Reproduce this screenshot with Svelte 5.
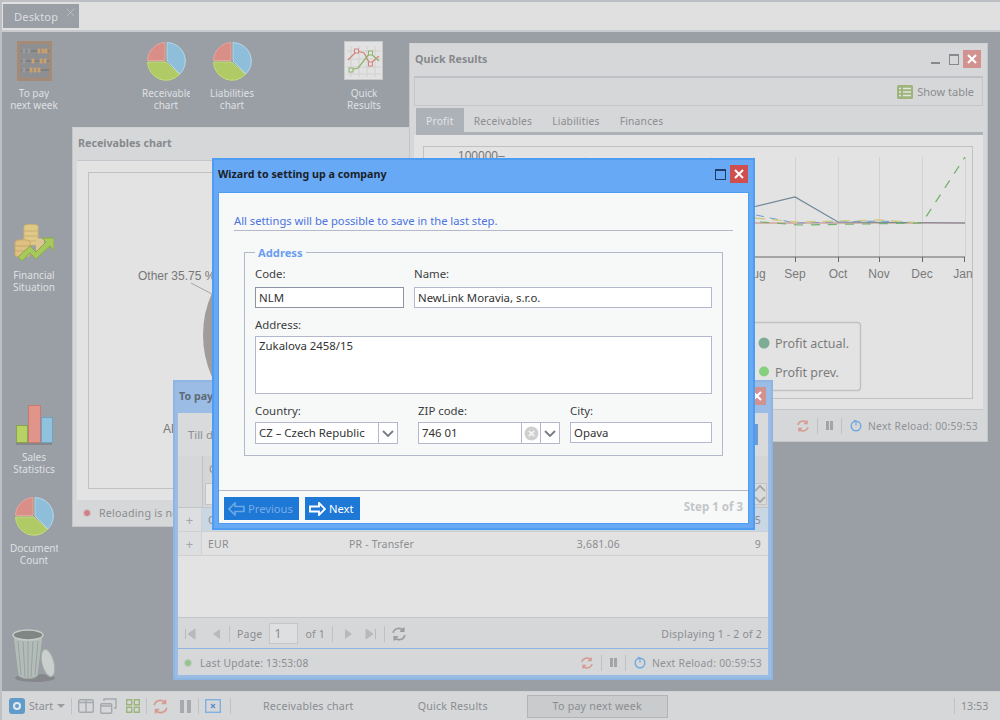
<script>
	const shortcuts = [
		{ x: 0, y: 9, lines: ['To pay', 'next week'], icon: 'abacus' },
		{ x: 132, y: 9, lines: ['Receivable', 'chart'], icon: 'pie' },
		{ x: 198, y: 9, lines: ['Liabilities', 'chart'], icon: 'pie' },
		{ x: 330, y: 9, lines: ['Quick', 'Results'], icon: 'lines' },
		{ x: 0, y: 191, lines: ['Financial', 'Situation'], icon: 'coins' },
		{ x: 0, y: 373, lines: ['Sales', 'Statistics'], icon: 'bars' },
		{ x: 0, y: 464, lines: ['Documents', 'Count'], icon: 'pie' }
	];
	const tabs = ['Receivables', 'Liabilities', 'Finances'];
	const gridX = [541, 585, 626, 669, 711, 753, 795, 838, 879, 922, 965];
	const months = [['Sep', 795], ['Oct', 838], ['Nov', 879], ['Dec', 922], ['Jan', 963]];
</script>

{#snippet pie()}
	<svg width="40" height="40" viewBox="0 0 40 40">
		<circle cx="20" cy="21" r="19" fill="#7f8a70" opacity=".5" />
		<path d="M19 19.500 H1.500 A18.500 18.500 0 0 1 19 1.500Z" fill="#d98f87" stroke="#e6a79f" />
		<path d="M21 1.500 A18.500 18.500 0 0 1 34 33 L21 20Z" fill="#8fbedb" stroke="#b5d8ea" />
		<path d="M1.500 21 H20 L33.500 33.500 A18.500 18.500 0 0 1 1.500 21Z" fill="#b0cb66" stroke="#c6dc86" />
	</svg>
{/snippet}

{#snippet abacus()}
	<svg width="40" height="40" viewBox="0 0 40 40">
		<rect x="4.500" y="1.500" width="32" height="37" fill="#8d8f92" stroke="#a58a76" stroke-width="3" />
		{#each [10, 20, 29] as y}
			<path d="M7 {y} H35" stroke="#6e7075" />
		{/each}
		{#each [[10, 10, '#9b9b9b'], [15, 10, '#9b9b9b'], [25, 10, '#c9a070'], [29, 10, '#c9a070'], [32, 10, '#c9a070'], [10, 20, '#9b9b9b'], [19, 20, '#c9a070'], [27, 20, '#c9a070'], [31, 20, '#c9a070'], [10, 29, '#9b9b9b'], [17, 29, '#c9a070'], [21, 29, '#c9a070'], [25, 29, '#c9a070']] as [x, y, c]}
			<rect x={x - 1.5} y={y - 2.5} width="3" height="5" rx="1" fill={c} />
		{/each}
	</svg>
{/snippet}

{#snippet lines()}
	<svg width="40" height="40" viewBox="0 0 40 40">
		<rect x=".5" y=".5" width="38" height="38" fill="#e2e2e2" stroke="#c8c8c8" />
		<path d="M7 5V36M15 5V36M23 5V36M31 5V36M3 10H37M3 18H37M3 26H37M3 33H37" stroke="#d0d0d0" />
		<path d="M4 19 L13 10 L20 12 L26 23 L35 15" fill="none" stroke="#d3847b" stroke-width="1.300" />
		<path d="M7 29 L14 27 L26 12 L35 20" fill="none" stroke="#90b568" stroke-width="1.300" />
		<rect x="10.500" y="8" width="4" height="4" fill="#e2e2e2" stroke="#d3847b" />
		<rect x="24.500" y="21" width="4" height="4" fill="#e2e2e2" stroke="#d3847b" />
		<rect x="5" y="27" width="4" height="4" fill="#e2e2e2" stroke="#90b568" />
		<rect x="24.500" y="10" width="4" height="4" fill="#e2e2e2" stroke="#90b568" />
	</svg>
{/snippet}

{#snippet coins()}
	<svg width="40" height="40" viewBox="0 0 40 40">
		<path d="M10 3 C10 1 24 1 24 3 V22 H10Z" fill="#dfc888" stroke="#cdb46e" />
		<path d="M10 8H24M10 13H24M10 18H24" stroke="#c8b070" />
		<path d="M1 19 C1 16 16 16 16 19 V32 C16 35 1 35 1 32Z" fill="#dec083" stroke="#c9a96a" />
		<path d="M1 23H16M1 28H16" stroke="#c8a868" />
		<path d="M22 17 C22 15 30 15 30 17 V28 H22Z" fill="#dcc590" />
		<path d="M4 34 L16 23 L22 29 L32 19 L28 15 H40 V28 L36 23 L22 36 L16 30 L8 38Z" fill="#a7c85c" stroke="#8aab47" />
	</svg>
{/snippet}

{#snippet bars()}
	<svg width="40" height="40" viewBox="0 0 40 40">
		<rect x="2" y="38" width="36" height="2" fill="#86888c" />
		<rect x="2.500" y="20.500" width="11" height="17" fill="#b8d165" stroke="#8aa34f" />
		<rect x="14.500" y=".5" width="12" height="37" fill="#e0948a" stroke="#c87a70" />
		<rect x="27.500" y="12.500" width="11" height="25" fill="#90c2de" stroke="#6fa3c2" />
	</svg>
{/snippet}

{#snippet winButtons(minimise)}
	<div class="win-buttons">
		{#if minimise}<span class="btn-min"></span>{/if}
		<span class="btn-max"></span>
		<span class="btn-close">
			<svg width="10" height="10" viewBox="0 0 10 10"><path d="M1 1 9 9M9 1 1 9" stroke="#fff" stroke-width="2" /></svg>
		</span>
	</div>
{/snippet}

{#snippet reloadStatus()}
	<div class="reload">
		<svg width="12" height="12" viewBox="0 0 12 12"><path d="M1 5 A5 4.500 0 0 1 10 3 M11 7 A5 4.500 0 0 1 2 9 M10 .5V3.500H7M2 11.500V8.500H5" fill="none" stroke="#d69a90" stroke-width="1.500" /></svg>
		<i class="vsep"></i>
		<span class="pause"></span>
		<i class="vsep"></i>
		<svg width="12" height="13" viewBox="0 0 12 13"><circle cx="6" cy="7" r="4.800" fill="none" stroke="#6ea8e0" stroke-width="1.400" /><path d="M4 1 6 2.500V6.500" fill="none" stroke="#6ea8e0" stroke-width="1.200" /></svg>
		<span class="reload-text">Next Reload: 00:59:53</span>
	</div>
{/snippet}

<div class="page">
	<header class="tabstrip">
		<div class="desktop-tab">
			<span>Desktop</span>
			<svg class="tab-x" width="9" height="9" viewBox="0 0 9 9"><path d="M.5 .5 8.500 8.500M8.500 .5 .5 8.500" stroke="#b9bbbd" /></svg>
		</div>
	</header>

	<main class="desktop">
		{#each shortcuts as s}
			<div class="shortcut" style="left: {s.x}px; top: {s.y}px">
				<div class="glyph">
					{#if s.icon === 'pie'}{@render pie()}
					{:else if s.icon === 'abacus'}{@render abacus()}
					{:else if s.icon === 'lines'}{@render lines()}
					{:else if s.icon === 'coins'}{@render coins()}
					{:else}{@render bars()}{/if}
				</div>
				<span>{s.lines[0]}</span>
				<span>{s.lines[1]}</span>
			</div>
		{/each}

		<div class="trash">
			<svg width="48" height="54" viewBox="0 0 48 54">
				<ellipse cx="24" cy="49" rx="20" ry="4" fill="#85878b" />
				<path d="M2 6 L7 46 C10 51 24 51 27 46 L32 6Z" fill="#b3bcb8" stroke="#98a29e" />
				<path d="M7 12 10 46M12 12 14 48M17 12 17 49M22 12 20 48M27 12 24 46" stroke="#98a29e" />
				<ellipse cx="17" cy="6" rx="15" ry="5" fill="#7f8684" stroke="#c5cdca" stroke-width="1.500" />
				<ellipse cx="37" cy="34" rx="6" ry="14" fill="#c9d0cd" stroke="#a5aeaa" transform="rotate(-14 37 34)" />
			</svg>
		</div>

		<section class="window receivables">
			<div class="win-title dim"><b>Receivables chart</b></div>
			<div class="win-body">
				<svg class="pie-chart" width="340" height="318" viewBox="88 172 340 318">
					<rect x="88.500" y="172.500" width="338" height="316" fill="none" stroke="#bfc1c5" />
					<path d="M212 293 A102.500 102.500 0 0 0 212 377Z" fill="#a09c9c" />
					<path d="M191 283 212 294" stroke="#a5a5a5" />
					<text x="138" y="280" class="chart-text">Other 35.75 %</text>
					<text x="163" y="433" class="chart-text">AR</text>
				</svg>
			</div>
			<div class="win-status">
				<span class="dot red"></span>
				<span>Reloading is not active</span>
			</div>
		</section>

		<section class="window quick">
			<div class="win-title dim">
				<b>Quick Results</b>
				{@render winButtons(true)}
			</div>
			<div class="toolbar">
				<svg width="16" height="14" viewBox="0 0 16 14"><rect width="16" height="14" rx="1.500" fill="#9db57c" /><path d="M2 3.500H4M6 3.500H14M2 7H4M6 7H14M2 10.500H4M6 10.500H14" stroke="#e3e6dc" stroke-width="1.600" /></svg>
				<span>Show table</span>
			</div>
			<nav class="tabs">
				<span class="tab active">Profit</span>
				{#each tabs as t}
					<span class="tab">{t}</span>
				{/each}
			</nav>
			<div class="chart-panel">
				<svg width="550" height="254" viewBox="423 146 550 254">
					<rect x="423.500" y="146.500" width="549" height="252" fill="none" stroke="#bfc1c5" />
					{#each gridX as x}
						<path d="M{x + .5} 157V257" stroke="#d2d2d2" />
					{/each}
					<text x="458" y="160" class="chart-text">100000–</text>
					<path d="M745 223H965" stroke="#d0837a" />
					<path d="M745 209 795 197 838 222 965 223" fill="none" stroke="#70889a" stroke-width="1.200" />
					<path d="M756 215 795 223 838 222 880 221 922 223" fill="none" stroke="#6f9bd0" stroke-dasharray="8 6" />
					<path d="M755 218 795 222 838 221 880 220 922 223" fill="none" stroke="#cfcb80" stroke-width="1.300" stroke-dasharray="10 7" />
					<path d="M760 222 800 225 922 223 965 157" fill="none" stroke="#73b06f" stroke-width="1.200" stroke-dasharray="9 8" />
					<path d="M730 257H965M795.500 257V262M838.500 257V262M879.500 257V262M922.500 257V262M964.500 257V262" stroke="#666" />
					<text x="755" y="278" class="axis" text-anchor="middle">Aug</text>
					{#each months as [m, x]}
						<text {x} y="278" class="axis" text-anchor="middle">{m}</text>
					{/each}
					<rect x="740.500" y="322.500" width="120" height="68" rx="3" fill="none" stroke="#c1c1c1" stroke-width="1.400" />
					<circle cx="764" cy="343" r="5.500" fill="#7dac96" />
					<circle cx="764" cy="371.500" r="5" fill="#86cf7c" />
					<text x="775" y="348" class="legend">Profit actual.</text>
					<text x="775" y="377" class="legend">Profit prev.</text>
				</svg>
			</div>
			<div class="win-status end">{@render reloadStatus()}</div>
		</section>

		<section class="window pay">
			<div class="pay-title">
				<b>To pay next week</b>
				<span class="btn-close">
					<svg width="10" height="10" viewBox="0 0 10 10"><path d="M1 1 9 9M9 1 1 9" stroke="#fff" stroke-width="2" /></svg>
				</span>
			</div>
			<div class="pay-body">
				<div class="pay-filter">
					<span>Till date</span>
					<span class="filter-btn"></span>
				</div>
				<div class="grid-head">
					<div class="grid-gutter"></div>
					<div class="grid-headcell">
						<span>Currency</span>
						<div class="grid-filter">
							<span class="filter-box"></span>
							<svg width="12" height="20" viewBox="0 0 12 20"><path d="M1 7 6 2 11 7M1 13 6 18 11 13" fill="none" stroke="#a2a2a2" stroke-width="1.600" /></svg>
						</div>
					</div>
				</div>
				<div class="row selected">
					<span class="plus">+</span>
					<span class="c1">CZK</span>
					<span class="c2"></span>
					<span class="c3"></span>
					<span class="c4">15</span>
				</div>
				<div class="row">
					<span class="plus">+</span>
					<span class="c1">EUR</span>
					<span class="c2">PR - Transfer</span>
					<span class="c3">3,681.06</span>
					<span class="c4">9</span>
				</div>
				<div class="grid-fill"></div>
				<div class="pager">
					<svg width="12" height="12" viewBox="0 0 12 12"><path d="M1.500 1V11M11 1 4 6 11 11Z" fill="#b7b9bb" stroke="#b7b9bb" /></svg>
					<svg class="prev" width="10" height="12" viewBox="0 0 10 12"><path d="M8 1 1 6 8 11Z" fill="#b7b9bb" /></svg>
					<i class="vsep"></i>
					<span>Page</span>
					<span class="page-no">1</span>
					<span>of 1</span>
					<i class="vsep"></i>
					<svg class="gap" width="10" height="12" viewBox="0 0 10 12"><path d="M1 1 8 6 1 11Z" fill="#b7b9bb" /></svg>
					<svg class="gap" width="12" height="12" viewBox="0 0 12 12"><path d="M10.500 1V11M1 1 8 6 1 11Z" fill="#b7b9bb" stroke="#b7b9bb" /></svg>
					<i class="vsep"></i>
					<svg width="14" height="14" viewBox="0 0 12 12"><path d="M1 5 A5 4.500 0 0 1 10 3 M11 7 A5 4.500 0 0 1 2 9 M10 .5V3.500H7M2 11.500V8.500H5" fill="none" stroke="#9a9c9e" stroke-width="1.500" /></svg>
					<span class="push">Displaying 1 - 2 of 2</span>
				</div>
				<div class="pay-status">
					<span class="dot green"></span>
					<span>Last Update: 13:53:08</span>
					{@render reloadStatus()}
				</div>
			</div>
		</section>

		<section class="wizard">
			<div class="wizard-title">
				<b>Wizard to setting up a company</b>
				<div class="win-buttons">
					<span class="btn-max strong"></span>
					<span class="btn-close live">
						<svg width="10" height="10" viewBox="0 0 10 10"><path d="M1 1 9 9M9 1 1 9" stroke="#fff" stroke-width="2" /></svg>
					</span>
				</div>
			</div>
			<div class="wizard-body">
				<p class="hint">All settings will be possible to save in the last step.</p>
				<fieldset>
					<legend>Address</legend>
					<div class="form-row first">
						<label class="code">Code:<span class="input focus">NLM</span></label>
						<label class="grow">Name:<span class="input">NewLink Moravia, s.r.o.</span></label>
					</div>
					<label class="address">Address:<span class="input area">Zukalova 2458/15</span></label>
					<div class="form-row wide">
						<label class="country">Country:
							<span class="input combo">
								<span class="val">CZ – Czech Republic</span>
								<span class="trigger"><svg width="12" height="7" viewBox="0 0 12 7"><path d="M1 1 6 6 11 1" fill="none" stroke="#777c84" stroke-width="1.800" /></svg></span>
							</span>
						</label>
						<label class="zip">ZIP code:
							<span class="input combo">
								<span class="val">746 01</span>
								<span class="trigger clear"><svg width="15" height="15" viewBox="0 0 14 14"><circle cx="7" cy="7" r="6.500" fill="#cfcfcf" /><path d="M4.500 4.500 9.500 9.500M9.500 4.500 4.500 9.500" stroke="#f4f4f4" stroke-width="1.600" /></svg></span>
								<span class="trigger"><svg width="12" height="7" viewBox="0 0 12 7"><path d="M1 1 6 6 11 1" fill="none" stroke="#777c84" stroke-width="1.800" /></svg></span>
							</span>
						</label>
						<label class="grow">City:<span class="input">Opava</span></label>
					</div>
				</fieldset>
				<footer class="wizard-foot">
					<button class="step-btn off">
						<svg width="17" height="14" viewBox="0 0 17 14"><path d="M7 1 1 7 7 13V9.500H16V4.500H7Z" fill="none" stroke="#6aa9e6" stroke-width="1.600" /></svg>
						Previous
					</button>
					<button class="step-btn next">
						<svg width="17" height="14" viewBox="0 0 17 14"><path d="M10 1 16 7 10 13V9.500H1V4.500H10Z" fill="none" stroke="#fff" stroke-width="1.800" /></svg>
						Next
					</button>
					<span class="step-no">Step 1 of 3</span>
				</footer>
			</div>
		</section>
	</main>

	<footer class="taskbar">
		<svg class="start-icon" width="16" height="16" viewBox="0 0 16 16"><rect width="16" height="16" rx="3" fill="#5f9ccb" /><circle cx="8" cy="8" r="4" fill="#e4e8ea" /><circle cx="8" cy="8" r="2" fill="#5f9ccb" /></svg>
		<span class="start">Start</span>
		<svg width="8" height="4" viewBox="0 0 8 4"><path d="M0 0H8L4 4Z" fill="#9a9c9e" /></svg>
		<i class="vsep"></i>
		<svg width="16" height="14" viewBox="0 0 16 14"><rect x=".7" y=".7" width="14.600" height="12.600" rx="1.500" fill="none" stroke="#a5a9ae" stroke-width="1.400" /><path d="M8 1V13M1 3.500H15" stroke="#a5a9ae" stroke-width="1.400" /></svg>
		<svg width="17" height="16" viewBox="0 0 17 16"><rect x=".7" y="5.700" width="11" height="9.500" rx="1" fill="none" stroke="#a5a9ae" stroke-width="1.400" /><path d="M4 3V1H16V10H14M1 8H12" fill="none" stroke="#a5a9ae" stroke-width="1.400" /></svg>
		<svg class="tiles" width="14" height="14" viewBox="0 0 14 14"><path d="M.7 .7h5v5h-5zM8.300 .7h5v5h-5zM.7 8.300h5v5h-5zM8.300 8.300h5v5h-5z" fill="none" stroke="#9db57c" stroke-width="1.400" /></svg>
		<i class="vsep"></i>
		<svg width="15" height="15" viewBox="0 0 12 12"><path d="M1 5 A5 4.500 0 0 1 10 3 M11 7 A5 4.500 0 0 1 2 9 M10 .5V3.500H7M2 11.500V8.500H5" fill="none" stroke="#d69a90" stroke-width="1.300" /></svg>
		<span class="pause big"></span>
		<i class="vsep"></i>
		<svg width="16" height="14" viewBox="0 0 16 14"><rect x=".7" y=".7" width="14.600" height="12.600" fill="none" stroke="#7eb0e4" stroke-width="1.400" /><path d="M6 5 10 9M10 5 6 9" stroke="#5a8fcc" stroke-width="1.400" /></svg>
		<i class="vsep last"></i>
		<span class="task first">Receivables chart</span>
		<span class="task second">Quick Results</span>
		<span class="task current">To pay next week</span>
		<i class="vsep clock-sep"></i>
		<span class="clock">13:53</span>
	</footer>
</div>

<style>
	:global(body) {
		margin: 0;
		background: #9a9ea5;
	}

	.page {
		display: flex;
		flex-direction: column;
		width: 1000px;
		height: 720px;
		overflow: hidden;
		font-family: 'Noto Sans', 'Open Sans', sans-serif;
		font-size: 10.700px;
		color: #8b8d90;
	}

	.tabstrip {
		flex: none;
		height: 24px;
		padding: 2px 0 2px 1px;
		background: #e0e0e0;
		border-top: 2px solid #bcbfc3;
		border-left: 2px solid #bcbfc3;
		border-bottom: 2px solid #c7cace;
	}

	.desktop-tab {
		position: relative;
		display: flex;
		align-items: center;
		width: 76px;
		height: 24px;
		padding-left: 11px;
		box-sizing: border-box;
		background: #9a9ea5;
		color: #dcdde0;
		font-size: 11px;
		letter-spacing: .2px;
	}

	.tab-x {
		position: absolute;
		top: 4px;
		right: 4px;
	}

	.desktop {
		position: relative;
		flex: 1;
		background: #9a9ea5;
		border-left: 2px solid #bcbfc3;
	}

	.shortcut {
		position: absolute;
		display: flex;
		flex-direction: column;
		align-items: center;
		width: 64px;
		color: #dfe0e2;
		font-size: 10px;
		line-height: 12px;
		white-space: nowrap;
	}

	.shortcut span {
		max-width: 48px;
		overflow: hidden;
	}

	.glyph {
		height: 40px;
		margin-bottom: 6px;
	}

	.trash {
		position: absolute;
		left: 9px;
		top: 597px;
	}

	.window {
		position: absolute;
		display: flex;
		flex-direction: column;
		box-sizing: border-box;
		background: #d6d7d9;
		border: 1px solid #c4c6c9;
		border-top-color: #d0d2d4;
	}

	.receivables {
		left: 70px;
		top: 95px;
		width: 360px;
		height: 400px;
	}

	.quick {
		left: 407px;
		top: 11px;
		width: 579px;
		height: 399px;
	}

	.win-title {
		flex: none;
		display: flex;
		align-items: center;
		justify-content: space-between;
		height: 32px;
		padding: 0 6px 2px 5px;
		box-sizing: border-box;
		color: #87898c;
		font-size: 10.700px;
	}

	.win-buttons {
		display: flex;
		align-items: center;
		gap: 4px;
	}

	.btn-min {
		width: 9px;
		height: 2px;
		margin: 8px 5px 0 0;
		background: #85888c;
	}

	.btn-max {
		width: 8px;
		height: 8px;
		border: 1px solid #85888c;
		border-top-width: 2px;
	}

	.btn-max.strong {
		border-color: #1f3d66;
		width: 9px;
		margin-right: 0;
	}

	.btn-close {
		display: flex;
		align-items: center;
		justify-content: center;
		width: 18px;
		height: 18px;
		background: #d29390;
	}

	.btn-close.live {
		background: #cf4f4f;
	}

	.win-body {
		flex: 1;
		margin: 0 4px;
		background: #e3e3e3;
		border-top: 1px solid #c4c6cb;
		padding: 11px 0 0 11px;
	}

	.pie-chart,
	.chart-panel svg {
		display: block;
	}

	.chart-text {
		font-family: 'Liberation Sans', sans-serif;
		font-size: 12px;
		fill: #777;
	}

	.axis {
		font-family: 'Liberation Sans', sans-serif;
		font-size: 12px;
		fill: #7a7a7a;
	}

	.legend {
		font-family: 'Noto Sans', sans-serif;
		font-size: 12.500px;
		fill: #7c7c7c;
	}

	.win-status {
		flex: none;
		display: flex;
		align-items: center;
		gap: 6px;
		height: 26px;
		padding-left: 10px;
		letter-spacing: .2px;
	}

	.win-status.end {
		justify-content: flex-end;
		height: 31px;
		padding: 0 9px 0 0;
	}

	.dot {
		flex: none;
		width: 6px;
		height: 6px;
		border-radius: 50%;
		border: 1px solid #c9cbcd;
		margin-right: 2px;
	}

	.dot.red {
		background: #d47f86;
	}

	.dot.green {
		background: #93c68b;
	}

	.toolbar {
		flex: none;
		display: flex;
		align-items: center;
		justify-content: flex-end;
		gap: 4px;
		height: 30px;
		margin: 0 4px;
		padding-right: 8px;
		box-sizing: border-box;
		border: 1px solid #c4c6cb;
		border-top: 2px solid #bfc1c6;
		color: #8b8d90;
		font-size: 11px;
	}

	.tabs {
		flex: none;
		display: flex;
		margin: 2px 4px 0 6px;
		height: 24px;
		border-bottom: 3px solid #adb1b8;
		letter-spacing: .2px;
		font-size: 10.300px;
	}

	.tab {
		display: flex;
		align-items: center;
		padding: 2px 10px 0;
	}

	.tab.active {
		background: #adb1b8;
		color: #e3e4e6;
	}

	.chart-panel {
		flex: 1;
		margin: 0 4px;
		padding: 11px 0 0 9px;
		background: #e3e3e3;
		border-bottom: 1px solid #c4c6cb;
		min-height: 0;
	}

	.reload {
		display: flex;
		align-items: center;
		gap: 8px;
		color: #909295;
		letter-spacing: .25px;
		font-size: 10.300px;
	}

	.reload-text {
		margin-left: -2px;
	}

	.vsep {
		flex: none;
		width: 1px;
		height: 16px;
		background: #bfc1c4;
	}

	.pause {
		width: 7px;
		height: 9px;
		box-sizing: border-box;
		border-left: 3px solid #a2a4a7;
		border-right: 3px solid #a2a4a7;
	}

	.pause.big {
		width: 11px;
		height: 13px;
		border-left-width: 4px;
		border-right-width: 4px;
		margin: 0 1px 0 6px;
		border-color: #a7a9ac;
	}

	.pay {
		left: 171px;
		top: 348px;
		width: 600px;
		height: 300px;
		border: 2px solid #8fb6e3;
		background: #9bbce4;
	}

	.pay-title {
		flex: none;
		display: flex;
		align-items: center;
		justify-content: space-between;
		height: 27px;
		padding: 0 5px 4px 4px;
		color: #5f6a78;
		font-size: 10.700px;
	}

	.pay-body {
		flex: 1;
		display: flex;
		flex-direction: column;
		margin: 0 3px 3px;
		background: #d6d7d9;
		min-height: 0;
	}

	.pay-filter {
		flex: none;
		display: flex;
		align-items: center;
		justify-content: space-between;
		height: 43px;
		padding: 0 10px;
		font-size: 11.300px;
		background: #d9dadc;
	}

	.filter-btn {
		width: 14px;
		height: 21px;
		background: #6a9bd4;
	}

	.grid-head {
		flex: none;
		display: flex;
		height: 52px;
		background: #d4d5d7;
		border-bottom: 1px solid #c2c4c7;
		box-sizing: border-box;
	}

	.grid-gutter {
		width: 24px;
		background: #d6d7d9;
		border-right: 1px solid #c0c2c5;
	}

	.grid-headcell {
		flex: 1;
		display: flex;
		flex-direction: column;
		justify-content: space-between;
		padding: 6px 3px 2px 2px;
	}

	.grid-headcell > span {
		padding-left: 4px;
	}

	.grid-filter {
		display: flex;
		align-items: center;
		justify-content: space-between;
		height: 22px;
		border: 1px solid #c2c4c7;
		box-sizing: border-box;
		margin-right: -2px;
		background: #d9dadc;
	}

	.filter-box {
		width: 150px;
		height: 20px;
		background: #e6e6e6;
	}

	.row {
		flex: none;
		display: flex;
		align-items: center;
		height: 24px;
		box-sizing: border-box;
		background: #e2e2e2;
		border-bottom: 1px solid #cfd0d2;
		font-size: 10.500px;
		letter-spacing: .2px;
	}

	.row.selected {
		background: #c9d6e4;
	}

	.plus {
		width: 24px;
		height: 100%;
		display: flex;
		align-items: center;
		justify-content: center;
		font-size: 13px;
		box-sizing: border-box;
		background: #dcdedf;
		border-right: 1px solid #cfd0d2;
		color: #a4a6a8;
	}

	.c1 {
		width: 147px;
		padding-left: 6px;
		box-sizing: border-box;
	}

	.c2 {
		width: 171px;
	}

	.c3 {
		width: 100px;
		text-align: right;
	}

	.c4 {
		flex: 1;
		text-align: right;
		padding-right: 7px;
	}

	.grid-fill {
		flex: 1;
		background: #e3e3e3;
		border-bottom: 1px solid #c4c6c8;
	}

	.pager {
		flex: none;
		display: flex;
		align-items: center;
		gap: 7px;
		height: 30px;
		padding: 1px 6px 0;
		box-sizing: border-box;
		font-size: 10.500px;
		letter-spacing: .2px;
	}

	.pager .prev {
		margin-left: 9px;
	}

	.pager .gap {
		margin-left: 4px;
	}

	.page-no {
		width: 29px;
		height: 21px;
		box-sizing: border-box;
		padding-left: 4px;
		line-height: 19px;
		background: #dedfe0;
		border: 1px solid #c4c6c8;
		font-size: 12px;
	}

	.push {
		margin-left: auto;
	}

	.pay-status {
		flex: none;
		display: flex;
		align-items: center;
		gap: 6px;
		height: 27px;
		padding: 1px 6px 0 6px;
		box-sizing: border-box;
		border-top: 1px solid #8fb6e3;
		letter-spacing: .2px;
		font-size: 10.300px;
	}

	.pay-status .reload {
		margin-left: auto;
	}

	.wizard {
		position: absolute;
		left: 210px;
		top: 126px;
		width: 543px;
		height: 372px;
		display: flex;
		flex-direction: column;
		box-sizing: border-box;
		padding: 0 4px 4px;
		background: #68a9f6;
		border: 2px solid #4f9cf3;
		color: #333;
	}

	.wizard-title {
		flex: none;
		display: flex;
		align-items: center;
		justify-content: space-between;
		height: 32px;
		padding: 0 1px 4px 0;
		box-sizing: border-box;
		color: #1a1f28;
		font-size: 10.700px;
	}

	.wizard-body {
		flex: 1;
		display: flex;
		flex-direction: column;
		background: #f7f9f9;
		border: 1px solid #4f9cf3;
		padding: 0 15px;
		min-height: 0;
		position: relative;
	}

	.hint {
		margin: 19px 0 0;
		height: 18px;
		line-height: 18px;
		flex: none;
		color: #4a72e0;
		font-size: 11.200px;
		border-bottom: 1px solid #b4b8c8;
	}

	fieldset {
		flex: none;
		margin: 15px 10px 0;
		padding: 7px 10px 0;
		height: 210px;
		box-sizing: border-box;
		border: 1px solid #b4b8cc;
		min-width: 0;
	}

	legend {
		padding: 0 3px;
		color: #6b9df0;
		font-weight: 700;
		font-size: 11.200px;
		line-height: 13px;
	}

	label {
		display: flex;
		flex-direction: column;
		font-size: 11.400px;
		line-height: 16px;
		color: #3b3d40;
	}

	.form-row {
		display: flex;
		gap: 10px;
	}

	.form-row.first .input {
		margin-top: 5px;
	}

	.form-row.wide {
		margin-top: 9px;
	}

	.code {
		width: 149px;
	}

	.grow {
		flex: 1;
	}

	.country {
		width: 143px;
		margin-right: 10px;
	}

	.zip {
		width: 142px;
	}

	.input {
		display: flex;
		align-items: center;
		height: 21px;
		margin-top: 3px;
		padding: 0 3px;
		box-sizing: border-box;
		background: #fff;
		border: 1px solid #b4b8cc;
		color: #333;
		font-size: 11.400px;
		white-space: nowrap;
	}

	.input.focus {
		border-color: #8f93a6;
	}

	.address {
		margin-top: 9px;
	}

	.input.area {
		align-items: flex-start;
		height: 58px;
		padding-top: 1px;
	}

	.combo {
		padding-right: 0;
		height: 22px;
	}

	.val {
		flex: 1;
	}

	.trigger {
		flex: none;
		display: flex;
		align-items: center;
		justify-content: center;
		width: 18px;
		height: 100%;
		border-left: 1px solid #b4b8cc;
	}

	.wizard-foot {
		position: absolute;
		left: 0;
		right: 0;
		bottom: 0;
		height: 32px;
		display: flex;
		align-items: flex-start;
		gap: 6px;
		padding: 0 5px;
		border-top: 1px solid #b4b8c8;
		background: #f7f9f9;
	}

	.step-btn {
		display: flex;
		align-items: center;
		gap: 3px;
		width: 75px;
		height: 23px;
		margin-top: 6px;
		padding: 0 0 0 4px;
		border: 0;
		background: #1e78d6;
		color: #fff;
		font: inherit;
		font-size: 11.200px;
	}

	.step-btn.next {
		width: 55px;
	}

	.step-btn.off {
		color: #78ace6;
	}

	.step-no {
		margin: 8px 0 0 auto;
		color: #c3c6c8;
		font-weight: 700;
		font-size: 11.500px;
	}

	.taskbar {
		flex: none;
		display: flex;
		align-items: center;
		height: 29px;
		padding-left: 7px;
		box-sizing: border-box;
		background: #d6d7d9;
		border-top: 1px solid #cfd1d3;
		border-left: 2px solid #bcbfc3;
		font-size: 10.700px;
		gap: 6px;
	}

	.start-icon {
		margin-right: -2px;
	}

	.start {
		margin-right: -2px;
	}

	.tiles {
		margin-left: 3px;
	}

	.vsep.last {
		margin-left: 3px;
	}

	.task {
		display: flex;
		align-items: center;
		justify-content: center;
		height: 23px;
		box-sizing: border-box;
		letter-spacing: .2px;
	}

	.task.first {
		margin-left: 26px;
	}

	.task.second {
		margin-left: 58px;
	}

	.task.current {
		width: 141px;
		margin-left: 33px;
		background: #c9cbcd;
		border: 1px solid #b2b4b7;
	}

	.clock-sep {
		margin-left: auto;
	}

	.clock {
		width: 39px;
	}
</style>
